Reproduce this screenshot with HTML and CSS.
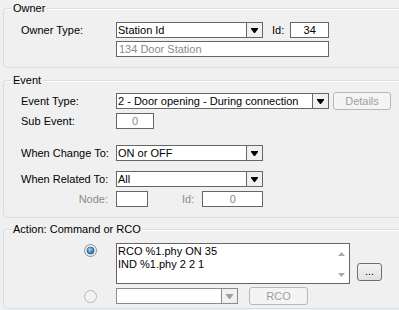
FILE: index.html
```html
<!DOCTYPE html>
<html lang="en">
<head>
    <meta charset="UTF-8">
    <title>Event action</title>
    <link rel="stylesheet" href="styles.css">
</head>
<body>
<div class="form">
    <!--Owner-->
    <div class="group owner">
        <span class="group-title">Owner</span>
        <div class="row">
            <span class="label">Owner Type:</span>
            <div class="combo w147">
                <span class="combo-text">Station Id</span>
                <span class="combo-btn"><svg width="7" height="5" viewBox="0 0 7 5"><polygon points="0,0 7,0 7,1 4,5 3,5 0,1" fill="#000"/></svg></span>
            </div>
            <span class="label-inline id-owner">Id:</span>
            <div class="input w39 center">34</div>
        </div>
        <div class="row gap3">
            <span class="label"></span>
            <div class="input w213 grey">134 Door Station</div>
        </div>
    </div>

    <!--Event-->
    <div class="group event">
        <span class="group-title">Event</span>
        <div class="row">
            <span class="label">Event Type:</span>
            <div class="combo w213">
                <span class="combo-text">2 - Door opening - During connection</span>
                <span class="combo-btn"><svg width="7" height="5" viewBox="0 0 7 5"><polygon points="0,0 7,0 7,1 4,5 3,5 0,1" fill="#000"/></svg></span>
            </div>
            <span class="btn btn-off details">Details</span>
        </div>
        <div class="row gap4">
            <span class="label">Sub Event:</span>
            <div class="input w38 center grey">0</div>
        </div>
        <div class="row gap16">
            <span class="label">When Change To:</span>
            <div class="combo w147">
                <span class="combo-text">ON or OFF</span>
                <span class="combo-btn"><svg width="7" height="5" viewBox="0 0 7 5"><polygon points="0,0 7,0 7,1 4,5 3,5 0,1" fill="#000"/></svg></span>
            </div>
        </div>
        <div class="row gap10">
            <span class="label">When Related To:</span>
            <div class="combo w147">
                <span class="combo-text">All</span>
                <span class="combo-btn"><svg width="7" height="5" viewBox="0 0 7 5"><polygon points="0,0 7,0 7,1 4,5 3,5 0,1" fill="#000"/></svg></span>
            </div>
        </div>
        <div class="row gap4">
            <span class="label label-right grey">Node:</span>
            <div class="input w32"></div>
            <span class="label-inline id-node grey">Id:</span>
            <div class="input w61 center grey">0</div>
        </div>
    </div>

    <!--Action-->
    <div class="group action">
        <span class="group-title">Action: Command or RCO</span>
        <div class="row row-tall">
            <span class="label radio-cell">
                <svg class="radio" width="13" height="13" viewBox="0 0 13 13">
                    <defs>
                        <radialGradient id="dot" cx="40%" cy="35%" r="70%">
                            <stop offset="0" stop-color="#9fd3f7"/>
                            <stop offset="1" stop-color="#1a5a96"/>
                        </radialGradient>
                    </defs>
                    <circle cx="6.5" cy="6.5" r="6" fill="#eef0f1" stroke="#8c9195"/>
                    <circle cx="6.5" cy="6.5" r="3.6" fill="url(#dot)" stroke="#1d4f7c" stroke-width="0.6"/>
                </svg>
            </span>
            <div class="memo">
                <div class="memo-text">RCO %1.phy ON 35<br>IND %1.phy 2 2 1</div>
                <div class="memo-scroll">
                    <svg width="7" height="4" viewBox="0 0 7 4"><polygon points="3.5,0 7,4 0,4" fill="#a8a8a8"/></svg>
                    <svg width="7" height="4" viewBox="0 0 7 4"><polygon points="0,0 7,0 3.5,4" fill="#a8a8a8"/></svg>
                </div>
            </div>
            <span class="btn dots">...</span>
        </div>
        <div class="row gap4">
            <span class="label radio-cell">
                <svg class="radio" width="13" height="13" viewBox="0 0 13 13">
                    <circle cx="6.5" cy="6.5" r="6" fill="#f2f2f2" stroke="#b4b6b8"/>
                </svg>
            </span>
            <div class="combo combo-off w122">
                <span class="combo-text"></span>
                <span class="combo-btn"><svg width="7" height="5" viewBox="0 0 7 5"><polygon points="0,0 7,0 7,1 4,5 3,5 0,1" fill="#a0a0a0"/></svg></span>
            </div>
            <span class="btn btn-off rco">RCO</span>
        </div>
    </div>
</div>
</body>
</html>
```

FILE: styles.css
```css
* {
    margin: 0;
    padding: 0;
    box-sizing: border-box;
}
body {
    width: 399px;
    height: 310px;
    overflow: hidden;
    background: #f0f0f0;
    font-family: "Liberation Sans", Arial, sans-serif;
    font-size: 11px;
    color: #000;
}
.form {
    padding-top: 8px;
}
/*分组框*/
.group {
    position: relative;
    margin-left: 3px;
    margin-right: -12px;
    border: 1px solid #d5dfe5;
    border-radius: 4px;
    box-shadow: inset 0 1px 0 #fff;
}
.group-title {
    position: absolute;
    left: 7px;
    top: -7px;
    padding: 0 2px;
    line-height: 13px;
    background: #f0f0f0;
}
.owner {
    padding: 13px 0 10px 17px;
}
.event {
    margin-top: 12px;
    padding: 12px 0 10px 17px;
}
.action {
    margin-top: 11px;
    padding: 13px 0 4px 17px;
}
.row {
    display: flex;
    align-items: center;
    height: 16px;
}
.row-tall {
    height: 41px;
    align-items: flex-start;
}
.gap3 {
    margin-top: 3px;
}
.gap4 {
    margin-top: 4px;
}
.gap10 {
    margin-top: 10px;
}
.gap16 {
    margin-top: 16px;
}
.label {
    flex: none;
    width: 95px;
    white-space: nowrap;
}
.label-right {
    text-align: right;
    padding-right: 8px;
}
.label-inline {
    flex: none;
}
.grey {
    color: #8a8a8a;
}
.id-owner {
    margin: 0 6px 0 9px;
}
.id-node {
    margin: 0 8px 0 34px;
}
/*输入框*/
.input {
    flex: none;
    height: 16px;
    border: 1px solid #666;
    background: #fff;
    line-height: 14px;
    padding: 0 2px;
    white-space: nowrap;
}
.center {
    text-align: center;
}
.w32 { width: 32px; }
.w38 { width: 38px; }
.w39 { width: 39px; }
.w61 { width: 61px; }
.w122 { width: 122px; }
.w147 { width: 147px; }
.w213 { width: 213px; }
/*下拉框*/
.combo {
    flex: none;
    display: flex;
    height: 16px;
    border: 1px solid #666;
    background: #fff;
}
.combo-text {
    flex: 1;
    padding: 0 1px;
    line-height: 14px;
    white-space: nowrap;
    overflow: hidden;
}
.combo-btn {
    flex: none;
    width: 16px;
    display: flex;
    align-items: center;
    justify-content: center;
    border-left: 1px solid #666;
    background: #f0f0f0;
}
.combo-off {
    border-color: #8c8c8c;
}
.combo-off .combo-btn {
    border-left-color: #8c8c8c;
}
/*按钮*/
.btn {
    flex: none;
    display: flex;
    align-items: center;
    justify-content: center;
    height: 18px;
    border: 1px solid #707070;
    border-radius: 3px;
    background: linear-gradient(#f4f4f4, #e0e0e0);
}
.btn-off {
    border-color: #b5b9bc;
    background: #f4f4f4;
    color: #a0a0a0;
}
.details {
    width: 58px;
    margin-left: 4px;
}
.dots {
    width: 25px;
    margin: 20px 0 0 7px;
    padding-bottom: 2px;
}
.rco {
    width: 59px;
    margin-left: 11px;
}
/*单选*/
.radio-cell {
    display: flex;
    padding-left: 63px;
}
.row-tall .radio {
    margin-top: 1px;
}
/*多行文本*/
.memo {
    flex: none;
    display: flex;
    width: 234px;
    height: 41px;
    border: 1px solid #666;
    background: #fff;
}
.memo-text {
    flex: 1;
    padding: 1px 1px;
    line-height: 13px;
}
.memo-scroll {
    flex: none;
    width: 16px;
    display: flex;
    flex-direction: column;
    align-items: center;
    justify-content: space-between;
    padding: 8px 0 6px;
}
.memo-scroll svg {
    display: block;
}
```
